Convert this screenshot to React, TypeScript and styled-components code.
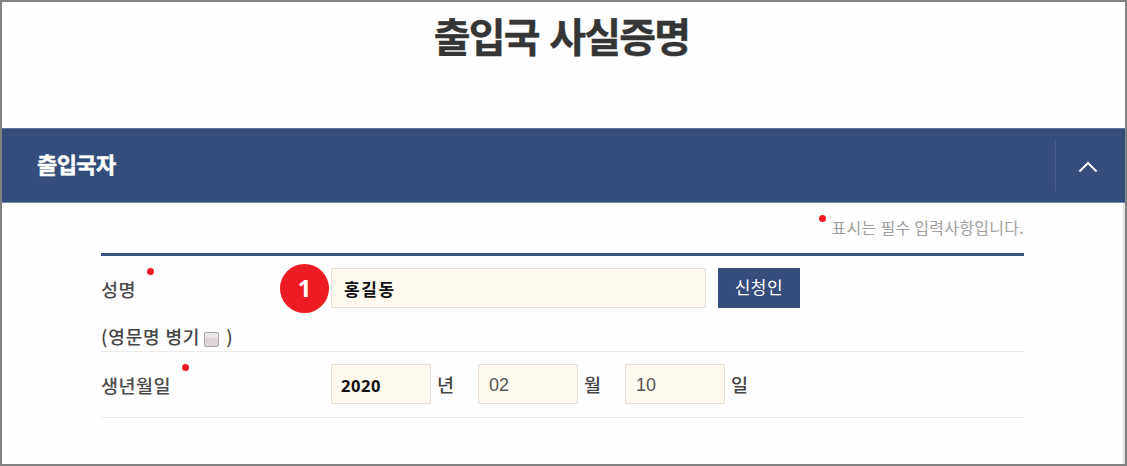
import React from 'react';
import styled, { createGlobalStyle } from 'styled-components';

const GlobalStyle = createGlobalStyle`
  * {
    box-sizing: border-box;
  }
  body {
    margin: 0;
    background: #fff;
    font-family: 'Noto Sans CJK KR', sans-serif;
  }
`;
const Page = styled.div`
  width: 1127px;
  height: 466px;
  border: 2px solid #828282;
  background: #fefefe;
  overflow: hidden;
  display: flex;
  flex-direction: column;
`;
const Title = styled.h1`
  height: 126px;
  margin: 0;
  padding: 3px 4px 0 0;
  text-align: center;
  font-size: 40px;
  line-height: 60px;
  font-weight: 700;
  letter-spacing: -1.8px;
  word-spacing: 3px;
  color: #353535;
  -webkit-text-stroke: 0.4px #353535;
`;
const SectionHeader = styled.div`
  height: 75px;
  flex: none;
  display: flex;
  align-items: center;
  justify-content: space-between;
  padding-left: 35px;
  background: #354d7a;
  border-top: 1px solid #5f739a;
  border-bottom: 1px solid #7a8aab;
`;
const SectionTitle = styled.h2`
  margin: 0;
  padding-bottom: 5px;
  font-size: 22px;
  line-height: 30px;
  font-weight: 700;
  letter-spacing: -0.6px;
  color: #fff;
  -webkit-text-stroke: 0.5px #fff;
`;
const ToggleButton = styled.button`
  width: 70px;
  height: 50px;
  padding: 3px 6px 0 0;
  border: 0;
  border-left: 1px solid #485f8b;
  background: none;
  display: flex;
  align-items: center;
  justify-content: center;
`;
const SectionBody = styled.div`
  flex: 1;
  padding: 0 99px 0 99px;
  border-right: 2px solid #e2e2e2;
`;
const Notice = styled.div`
  height: 50px;
  display: flex;
  justify-content: flex-end;
  padding-top: 12px;
  font-size: 16px;
  line-height: 25px;
  letter-spacing: 0.28px;
  color: #a0a0a0;
`;
const Dot = styled.i<{ $left?: number; $right?: number }>`
  width: 7px;
  height: 7px;
  flex: none;
  border-radius: 50%;
  background: #ed1c24;
  margin: 0 ${props => props.$right || 0}px 0 ${props => props.$left || 0}px;
`;
const Form = styled.div`
  width: 923px;
  border-top: 3px solid #3c5381;
`;
const Row = styled.div<{ $height: number }>`
  height: ${props => props.$height}px;
  padding-top: 12px;
  display: flex;
  border-bottom: 1px solid #ebebeb;
`;
const LabelCell = styled.div`
  width: 178px;
  flex: none;
`;
const Label = styled.div`
  height: 40px;
  display: flex;
  font-size: 18.5px;
  font-weight: 500;
  color: #4a4a4a;
  letter-spacing: 0.5px;

  span {
    line-height: 42px;
  }
`;
const SubLabel = styled.label`
  display: flex;
  align-items: center;
  height: 28px;
  margin-top: 14px;
  font-size: 18px;
  font-weight: 500;
  letter-spacing: 0.85px;
  white-space: pre;
  color: #444;
`;
const Checkbox = styled.input`
  appearance: none;
  width: 15px;
  height: 15px;
  margin: 6px 7px 0 4px;
  border: 1px solid #a9a4a4;
  border-radius: 2px;
  background: linear-gradient(#e9e6e6 35%, #ded6d6 36%);
`;
const StepCell = styled.div`
  width: 52px;
  flex: none;
`;
const Step = styled.div`
  width: 49px;
  height: 49px;
  margin: -4px 0 0 1px;
  border-radius: 50%;
  background: #ed1c24;
  color: #fff;
  font-family: 'Noto Sans', sans-serif;
  font-size: 24px;
  line-height: 47px;
  font-weight: 700;
  text-align: center;
`;
const Input = styled.input<{ $width: number; $strong?: boolean; $latin?: boolean }>`
  width: ${props => props.$width}px;
  height: 40px;
  padding: ${props => (props.$latin ? '2px 0 0 9px' : '0 0 0 12px')};
  border: 1px solid #e6dcd8;
  border-radius: 0;
  outline: 0;
  background: #fffaf0;
  font-family: ${props =>
    props.$latin ? `'Open Sans', sans-serif` : `'Noto Sans CJK KR', sans-serif`};
  font-size: ${props => (props.$latin ? 16.5 : 17)}px;
  font-weight: ${props => (props.$strong ? 700 : 400)};
  letter-spacing: ${props => (props.$latin ? 0.6 : 1.6)}px;
  color: ${props => (props.$strong ? '#111' : '#555')};
`;
const DateInput = styled(Input)`
  font-family: 'Liberation Sans', sans-serif;
  font-size: 18px;
  letter-spacing: 0;
  padding: 2px 0 0 10px;
`;
const ApplicantButton = styled.button`
  width: 82px;
  height: 40px;
  margin-left: 12px;
  padding: 0 0 3px;
  border: 0;
  background: #354d7a;
  color: #fff;
  font-family: 'Noto Sans CJK KR', sans-serif;
  font-size: 17px;
  letter-spacing: 0.6px;
`;
const Unit = styled.span`
  width: 47px;
  padding-left: 6px;
  font-size: 18.5px;
  line-height: 40px;
  font-weight: 500;
  color: #444;
`;

function App() {
  return (
    <Page>
      <GlobalStyle />
      <Title>출입국 사실증명</Title>
      <SectionHeader>
        <SectionTitle>출입국자</SectionTitle>
        <ToggleButton aria-label="접기">
          <svg width="20" height="12" viewBox="0 0 20 12" fill="none">
            <path d="M1.5 10.5 10 2l8.5 8.5" stroke="#fff" strokeWidth="2" />
          </svg>
        </ToggleButton>
      </SectionHeader>
      <SectionBody>
        <Notice>
          <Dot $right={6} />
          <span>표시는 필수 입력사항입니다.</span>
        </Notice>
        <Form>
          <Row $height={96}>
            <LabelCell>
              <Label>
                <span>성명</span>
                <Dot $left={11} />
              </Label>
              <SubLabel>
                (영문명 병기
                <Checkbox type="checkbox" />)
              </SubLabel>
            </LabelCell>
            <StepCell>
              <Step>1</Step>
            </StepCell>
            <Input $width={375} $strong defaultValue="홍길동" />
            <ApplicantButton>신청인</ApplicantButton>
          </Row>
          <Row $height={66}>
            <LabelCell>
              <Label>
                <span>생년월일</span>
                <Dot $left={11} />
              </Label>
            </LabelCell>
            <StepCell />
            <Input $width={100} $strong $latin defaultValue="2020" />
            <Unit>년</Unit>
            <DateInput $width={100} defaultValue="02" />
            <Unit>월</Unit>
            <DateInput $width={100} defaultValue="10" />
            <Unit>일</Unit>
          </Row>
        </Form>
      </SectionBody>
    </Page>
  );
}

export default App;
